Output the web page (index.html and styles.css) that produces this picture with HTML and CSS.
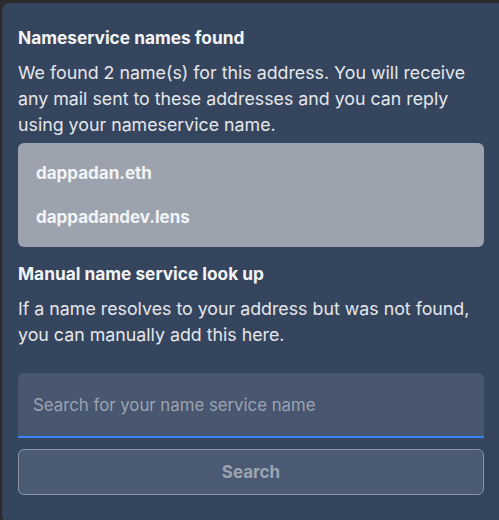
FILE: index.html
```html
<!DOCTYPE html>
<html>
<head>
<meta charset="utf-8">
<link rel="stylesheet" href="styles.css">
</head>
<body>
<div class="panel">
  <h3 class="title">Nameservice names found</h3>
  <p class="text">We found 2 name(s) for this address. You will receive any mail sent to these addresses and you can reply using your nameservice name.</p>
  <div class="names">
    <div class="name">dappadan.eth</div>
    <div class="name">dappadandev.lens</div>
  </div>
  <h3 class="title title-manual">Manual name service look up</h3>
  <p class="text">If a name resolves to your address but was not found, you can manually add this here.</p>
  <input class="search-input" type="text" placeholder="Search for your name service name">
  <button class="search-btn" disabled>Search</button>
</div>
</body>
</html>
```
FILE: styles.css
```css
html, body {
  margin: 0;
  padding: 0;
  background: #2b2b2c;
  height: 100%;
  overflow: hidden;
}
body {
  font-family: Inter, "Noto Sans", sans-serif;
  color: #e5e7eb;
}
.panel {
  margin: 3px 0 0 2px;
  height: 520px;
  background: #36455e;
  border-radius: 8px 0 0 8px;
  padding: 25px 15px 0 16px;
  box-sizing: border-box;
}
.title {
  margin: 0;
  font-size: 17.3px;
  font-weight: 700;
  line-height: 20px;
  color: #f3f4f6;
}
.text {
  margin: 12px 0 0;
  font-size: 17.8px;
  line-height: 26px;
  color: #e5e7eb;
}
.names {
  margin-top: 5px;
  background: #9ca3af;
  border-radius: 6px;
  padding: 8px 18px;
  height: 104px;
  box-sizing: border-box;
}
.name {
  font-size: 17px;
  font-weight: 700;
  color: #f3f4f6;
  line-height: 44px;
}
.title-manual {
  margin-top: 17px;
}
.search-input {
  display: block;
  width: 100%;
  box-sizing: border-box;
  margin-top: 25px;
  height: 65px;
  background: #485670;
  border: none;
  border-bottom: 2px solid #3b82f6;
  border-radius: 6px 6px 0 0;
  padding: 0 15px;
  font-family: inherit;
  font-size: 16.8px;
  color: #e5e7eb;
  outline: none;
}
.search-input::placeholder {
  color: #9ca3af;
}
.search-btn {
  display: block;
  width: 100%;
  margin-top: 11px;
  height: 46px;
  background: #4b5a73;
  border: 1px solid #8a94a4;
  border-radius: 6px;
  font-family: inherit;
  font-size: 17px;
  font-weight: 700;
  color: #9ba4b2;
}
```
